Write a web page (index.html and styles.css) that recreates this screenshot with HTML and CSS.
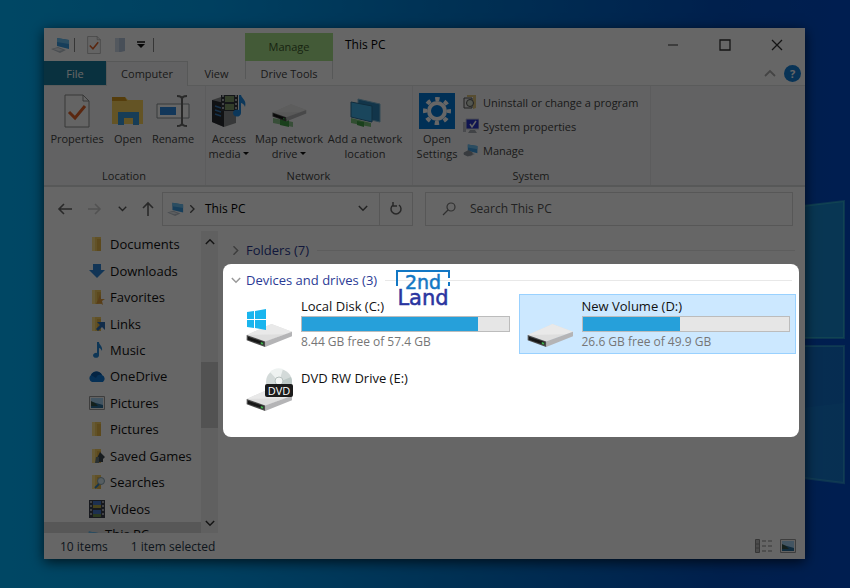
FILE: index.html
```
<!DOCTYPE html>
<html lang="en">
<head>
    <meta charset="UTF-8">
    <meta name="viewport" content="width=device-width, initial-scale=1.0">
    <title>This PC</title>
    <link rel="stylesheet" href="styles.css">
</head>
<body>
    <!-- shared icons -->
    <svg class="sprite" aria-hidden="true">
        <symbol id="pc" viewBox="0 0 20 18">
            <path d="M6 2l12 2v9L6 10z" fill="#3a9be0"/>
            <path d="M6 2l12 2v4L6 6z" fill="#6cc0f2"/>
            <path d="M0 13l7-2 8 3-6 3z" fill="#b9c3cc"/>
            <path d="M2 13l5-1 5 2-4 1z" fill="#e6ebef"/>
        </symbol>
        <symbol id="sheet" viewBox="0 0 26 34">
            <path d="M1 1h18l6 6v26H1z" fill="#fbfbfb" stroke="#8a8a8a"/>
            <path d="M19 1v6h6" fill="none" stroke="#8a8a8a"/>
            <path d="M5 18l6 6L21 12" fill="none" stroke="#e0622a" stroke-width="3"/>
        </symbol>
        <symbol id="folder" viewBox="0 0 16 16">
            <path d="M3 1h9v14H3z" fill="#f5ce62"/>
            <path d="M8 3h4v12H8z" fill="#e5b64a"/>
            <path d="M3 1h3v14H3z" fill="#ffe08a"/>
        </symbol>
        <symbol id="note" viewBox="0 0 16 16">
            <path d="M8 0h2c0 3 4 4 3 9-1-2-2-3-3-3v7a3 2.500 0 1 1-2-2z" fill="#2488d8"/>
        </symbol>
        <symbol id="picture" viewBox="0 0 16 14">
            <path d="M.5.500h15v13H.5z" fill="#f4f4f4" stroke="#9a9a9a"/>
            <path d="M2 2h12v10H2z" fill="#a8d4f5"/>
            <path d="M2 6l5 1 7 2v3H2z" fill="#2b6e9c"/>
            <path d="M2 5l4 2 3 3H2z" fill="#335247"/>
        </symbol>
        <symbol id="film" viewBox="0 0 16 18">
            <path d="M0 0h16v18H0z" fill="#3b3f4d"/>
            <path d="M4 1h8v7H4z" fill="#4a78c8"/>
            <path d="M4 5h8v3H4z" fill="#b4a844"/>
            <path d="M4 10h8v7H4z" fill="#4a78c8"/>
            <path d="M4 14h8v3H4z" fill="#6b8f50"/>
            <path d="M2 1v16M14 1v16" stroke="#a0a4aa" stroke-width="2" stroke-dasharray="2 2"/>
        </symbol>
        <symbol id="drive" viewBox="0 0 140 72">
            <path d="M2 36L76 3l61 23-80 30z" fill="#dedede"/>
            <path d="M2 36L76 3l61 23-20 8z" fill="#e9e9e9"/>
            <path d="M57 55l80-29v14L57 72z" fill="#b4b4b6"/>
            <path d="M2 36l55 19v17L2 52z" fill="#4a4a4a"/>
            <path d="M6 41l46 16v9L6 50z" fill="#171717"/>
            <path d="M44 57l7 2v6l-7-2z" fill="#3fb04c"/>
        </symbol>
        <symbol id="down" viewBox="0 0 12 8">
            <path d="M1 1l5 5 5-5" fill="none" stroke="currentColor" stroke-width="1.800"/>
        </symbol>
    </svg>

    <!-- wallpaper light panes -->
    <svg class="wallpaper" viewBox="0 0 850 588" preserveAspectRatio="xMaxYMid slice" aria-hidden="true">
        <path d="M700 218l144-17v137H700z" fill="#2ac4d8" fill-opacity=".5" stroke="#4fe0d0" stroke-width="2" stroke-opacity=".4"/>
        <path d="M700 346h144v137l-144-18z" fill="#2aa4d0" fill-opacity=".4" stroke="#4fd0d8" stroke-width="2" stroke-opacity=".4"/>
        <path d="M700 420l144-17v79l-144-17z" fill="#2ab4e6" fill-opacity=".12"/>
    </svg>

    <main class="window">
        <header class="titlebar">
            <div class="quick">
                <svg class="q-pc"><use href="#pc"/></svg>
                <span class="sep"></span>
                <button aria-label="Properties"><svg width="14" height="18"><use href="#sheet"/></svg></button>
                <button aria-label="New folder"><svg width="12" height="16"><path d="M1 1h10v13l-4 1H1z" fill="#b5c6dc"/><path d="M1 1h4v14H1z" fill="#cfdbea"/></svg></button>
                <button aria-label="Customize"><svg width="8" height="8"><path d="M0 1h8" stroke="#111" stroke-width="1.500"/><path d="M0 3h8L4 7z" fill="#111"/></svg></button>
                <span class="sep"></span>
            </div>
            <div class="manage">Manage</div>
            <h1>This PC</h1>
            <div class="controls">
                <button aria-label="Minimize"><svg width="12" height="12"><path d="M1 6h10" stroke="#333"/></svg></button>
                <button aria-label="Maximize"><svg width="12" height="12"><path d="M1 1h10v10H1z" fill="none" stroke="#333" stroke-width="1.300"/></svg></button>
                <button aria-label="Close"><svg width="12" height="12"><path d="M1 1l10 10M11 1L1 11" stroke="#333" stroke-width="1.300"/></svg></button>
            </div>
        </header>

        <nav class="tabs">
            <a href="#" class="file">File</a>
            <a href="#" class="computer">Computer</a>
            <a href="#" class="view">View</a>
            <a href="#" class="tools">Drive Tools</a>
            <div class="help">
                <button aria-label="Collapse ribbon"><svg class="up" width="12" height="8"><use href="#down"/></svg></button>
                <button class="question" aria-label="Help">?</button>
            </div>
        </nav>

        <section class="ribbon">
            <div class="group location">
                <div class="tools-row">
                    <button>
                        <svg width="26" height="34"><use href="#sheet"/></svg>
                        <span>Properties</span>
                    </button>
                    <button>
                        <svg width="34" height="34" viewBox="0 0 34 34">
                            <path d="M1 3h13l3 3h15v24H1z" fill="#f9d15c"/>
                            <path d="M1 3h13l2 4H1z" fill="#d59a20"/>
                            <path d="M7 31V18h21v13h-6v-7h-9v7z" fill="#3b9ad9"/>
                        </svg>
                        <span>Open</span>
                    </button>
                    <button>
                        <svg width="34" height="34" viewBox="0 0 34 34">
                            <path d="M1 10h32v14H1z" fill="#fff" stroke="#8a8f94"/>
                            <path d="M4 13h16v8H4z" fill="#2f8be0"/>
                            <path d="M21 2c3 0 5 1 5 3v24c0 2-2 3-5 3M31 2c-3 0-5 1-5 3v24c0 2 2 3 5 3" fill="none" stroke="#666" stroke-width="2"/>
                        </svg>
                        <span>Rename</span>
                    </button>
                </div>
                <h2>Location</h2>
            </div>
            <div class="group network">
                <div class="tools-row">
                    <button>
                        <svg width="36" height="34" viewBox="0 0 36 34">
                            <path d="M1 6l12-4 12 4v23l-12 4-12-5z" fill="#8b8d90"/>
                            <path d="M1 6l12 3v24L1 28z" fill="#2a2c30"/>
                            <path d="M4 12l6 2M4 16l6 2M4 20l6 2" stroke="#3b7bb8" stroke-width="1.500"/>
                            <path d="M10 1h17v16H10z" fill="#34373f"/>
                            <path d="M14 2h9v6h-9zM14 10h9v6h-9z" fill="#7f9c6a"/>
                            <path d="M12 1v16M25 1v16" stroke="#a8acb2" stroke-width="2" stroke-dasharray="2 2"/>
                            <path d="M28 1h2c1 4 6 5 4 12-1-3-3-4-4-4v10a4 3.500 0 1 1-2-3z" fill="#1f8ae0"/>
                        </svg>
                        <span>Access<br>media <i class="caret"></i></span>
                    </button>
                    <button>
                        <svg width="36" height="34" viewBox="0 0 36 34">
                            <path d="M2 24l20 4v5l-20-4z" fill="#8cc48c"/>
                            <path d="M9 25h9v8l-9-2z" fill="#43a047"/>
                            <use href="#drive" x="1" y="8" width="35" height="21"/>
                        </svg>
                        <span>Map network<br>drive <i class="caret"></i></span>
                    </button>
                    <button>
                        <svg width="34" height="34" viewBox="0 0 34 34">
                            <path d="M10 5l22 5v18l-22-5z" fill="#2f86b8" stroke="#7fb6d4"/>
                            <path d="M3 8l21 4v16L3 23z" fill="#43b0e6" stroke="#2a6f98"/>
                            <path d="M3 24l20 5v4L3 29z" fill="#7cc47c"/>
                            <path d="M9 27l7 1v5l-7-2z" fill="#43a047"/>
                        </svg>
                        <span>Add a network<br>location</span>
                    </button>
                </div>
                <h2>Network</h2>
            </div>
            <div class="group system">
                <div class="tools-row">
                    <button>
                        <svg width="36" height="36" viewBox="0 0 36 36">
                            <path d="M0 0h36v36H0z" fill="#0078d7"/>
                            <circle cx="18" cy="18" r="8" fill="none" stroke="#fff" stroke-width="4"/>
                            <circle cx="18" cy="18" r="12" fill="none" stroke="#fff" stroke-width="4" stroke-dasharray="4.400 5.025" stroke-dashoffset="2.200"/>
                        </svg>
                        <span>Open<br>Settings</span>
                    </button>
                    <ul class="links">
                        <li><button>
                            <svg width="16" height="16" viewBox="0 0 16 16">
                                <path d="M4 1h9v13l-3 1V3H4z" fill="#d9c07c"/>
                                <path d="M1 4h8v10H1z" fill="#e8e8e8" stroke="#555"/>
                                <circle cx="7" cy="9" r="3.500" fill="#cfd6c8" stroke="#555"/>
                            </svg>
                            Uninstall or change a program
                        </button></li>
                        <li><button>
                            <svg width="16" height="16" viewBox="0 0 16 16">
                                <path d="M0 4h3v10H0z" fill="#b8bcc4"/>
                                <path d="M3 1h13v10H3z" fill="#2a35c8" stroke="#c5c9d4"/>
                                <path d="M7 6l2 3 4-6" fill="none" stroke="#fff" stroke-width="1.500"/>
                                <path d="M7 12h5l2 3H5z" fill="#a4a8b0"/>
                            </svg>
                            System properties
                        </button></li>
                        <li><button>
                            <svg width="16" height="16" viewBox="0 0 20 18"><use href="#pc"/><path d="M1 12l6-3 5 3v3l-6 2-5-2z" fill="#8c959e"/></svg>
                            Manage
                        </button></li>
                    </ul>
                </div>
                <h2>System</h2>
            </div>
        </section>

        <div class="toolbar">
            <div class="history">
                <button aria-label="Back"><svg width="16" height="12"><path d="M15 6H2M7 1L2 6l5 5" fill="none" stroke="#666" stroke-width="1.600"/></svg></button>
                <button aria-label="Forward"><svg width="14" height="12"><path d="M0 6h12M7 1l5 5-5 5" fill="none" stroke="#ccc" stroke-width="1.600"/></svg></button>
                <button aria-label="Recent"><svg width="9" height="6"><use href="#down"/></svg></button>
                <button aria-label="Up"><svg width="12" height="15"><path d="M6 15V2M1 7l5-5 5 5" fill="none" stroke="#666" stroke-width="1.600"/></svg></button>
            </div>
            <div class="address">
                <svg width="18" height="16"><use href="#pc"/></svg>
                <svg class="right" width="9" height="6"><use href="#down"/></svg>
                <span>This PC</span>
                <button aria-label="Previous locations"><svg width="10" height="7"><use href="#down"/></svg></button>
                <button class="refresh" aria-label="Refresh"><svg width="14" height="14"><path d="M4 3a5 5 0 1 0 6 0M4 0v4h4" fill="none" stroke="#666" stroke-width="1.500"/></svg></button>
            </div>
            <label class="search">
                <svg width="14" height="14"><circle cx="9" cy="5" r="4" fill="none" stroke="#777" stroke-width="1.200"/><path d="M6 8l-5 5" stroke="#777" stroke-width="1.200"/></svg>
                <input type="text" placeholder="Search This PC" aria-label="Search This PC">
            </label>
        </div>

        <div class="body">
            <nav class="tree">
                <ul>
                    <li><a href="#"><svg><use href="#folder"/></svg>Documents</a></li>
                    <li><a href="#"><svg viewBox="0 0 16 16"><path d="M4 1h8v6h4l-8 8-8-8h4z" fill="#2f86d6"/></svg>Downloads</a></li>
                    <li><a href="#"><svg viewBox="0 0 16 16"><use href="#folder"/><path d="M11 5l1 5h4l-3 2 1 4-3-2-4 1 2-4z" fill="#dd9a3c"/></svg>Favorites</a></li>
                    <li><a href="#"><svg viewBox="0 0 16 16"><use href="#folder"/><path d="M8 6h8v8l-3-3-4 4-2-2 4-4z" fill="#2c6fb8"/></svg>Links</a></li>
                    <li><a href="#"><svg><use href="#note"/></svg>Music</a></li>
                    <li><a href="#"><svg viewBox="0 0 16 12"><path d="M3 12a4 4 0 0 1-1-7 6 6 0 0 1 11 0 4 4 0 0 1 1 7z" fill="#0f78d4"/><path d="M2 5a6 6 0 0 1 11 0c-3-1-5 0-6 3z" fill="#0a5aa8"/></svg>OneDrive</a></li>
                    <li><a href="#"><svg><use href="#picture"/></svg>Pictures</a></li>
                    <li><a href="#"><svg><use href="#folder"/></svg>Pictures</a></li>
                    <li><a href="#"><svg viewBox="0 0 16 16"><use href="#folder"/><path d="M11 4l5 5-2 2v3H9l1-3-2-1z" fill="#3c4a50"/><path d="M7 9h3v6H6z" fill="#6a7c80"/></svg>Saved Games</a></li>
                    <li><a href="#"><svg viewBox="0 0 16 16"><use href="#folder"/><circle cx="12" cy="7" r="3.500" fill="#d6ebf5" stroke="#8aa4b0"/><path d="M10 10l-4 4" stroke="#3a86c0" stroke-width="2"/></svg>Searches</a></li>
                    <li><a href="#"><svg><use href="#film"/></svg>Videos</a></li>
                </ul>
                <a href="#" class="current"><svg><use href="#pc"/></svg>This PC</a>
            </nav>
            <div class="scrollbar">
                <svg class="up" width="10" height="7"><use href="#down"/></svg>
                <div class="track"><div class="thumb"></div></div>
                <svg width="10" height="7"><use href="#down"/></svg>
            </div>

            <section class="content">
                <h2 class="heading">
                    <svg class="right" width="10" height="7"><use href="#down"/></svg>
                    Folders (7)
                </h2>
                <!-- spotlight: its shadow darkens everything around it -->
                <div class="spotlight">
                    <h2 class="heading">
                        <svg width="10" height="7"><use href="#down"/></svg>
                        Devices and drives (3)
                    </h2>
                    <div class="drives">
                        <article class="drive">
                            <svg viewBox="0 0 47 54">
                                <use href="#drive" y="25" width="47" height="26"/>
                                <path d="M1 15l7-1v8H1zM9 14l11-2v10H9zM1 23h7v8l-7-1zM9 23h11v10L9 31z" fill="#19b5ee"/>
                            </svg>
                            <div class="info">
                                <h3>Local Disk (C:)</h3>
                                <div class="bar"><div class="fill" style="width: 85%"></div></div>
                                <p>8.44 GB free of 57.4 GB</p>
                            </div>
                        </article>
                        <article class="drive selected">
                            <svg viewBox="0 0 47 54"><use href="#drive" y="25" width="47" height="26"/></svg>
                            <div class="info">
                                <h3>New Volume (D:)</h3>
                                <div class="bar"><div class="fill" style="width: 47%"></div></div>
                                <p>26.6 GB free of 49.9 GB</p>
                            </div>
                        </article>
                        <article class="drive">
                            <svg viewBox="0 0 47 54">
                                <circle cx="33" cy="13" r="13" fill="#d3dad9"/>
                                <path d="M33 13L24 3a13 13 0 0 1 13-3z" fill="#eef2f1"/>
                                <path d="M33 13l12-5a13 13 0 0 1 0 10z" fill="#bcc8c6"/>
                                <use href="#drive" y="17" width="47" height="26"/>
                                <circle cx="33" cy="12" r="4" fill="#f2f5f4" stroke="#b5bfbd"/>
                                <rect x="19" y="15" width="28" height="13" rx="2" fill="#1c1c1c"/>
                                <text x="33" y="26" class="dvd">DVD</text>
                            </svg>
                            <div class="info">
                                <h3>DVD RW Drive (E:)</h3>
                            </div>
                        </article>
                    </div>
                    <div class="logo">
                        <svg viewBox="0 0 56 40">
                            <path d="M2 18V3h52v7M54 14v4" fill="none" stroke="#1277c4" stroke-width="2"/>
                            <text x="28" y="21" class="top">2nd</text>
                            <text x="28" y="37" class="bottom">Land</text>
                        </svg>
                    </div>
                </div>
            </section>
        </div>

        <footer class="status">
            <span>10 items</span>
            <span>1 item selected</span>
            <div class="modes">
                <button aria-label="Details"><svg width="17" height="14"><path d="M.5.500h4v13h-4zM.5 5h4M.5 9h4" fill="#bbb" stroke="#888"/><path d="M7 2h4M13 2h4M7 7h4M13 7h4M7 12h4M13 12h4" stroke="#888"/></svg></button>
                <button aria-label="Large icons"><svg width="16" height="14"><use href="#picture"/></svg></button>
            </div>
        </footer>
    </main>
</body>
</html>
```
FILE: styles.css
```
*{
    margin: 0;
    padding: 0;
    box-sizing: border-box;
}
body{
    position: relative;
    height: 100vh;
    min-height: 560px;
    padding: 28px 45px 29px 44px;
    display: flex;
    overflow: hidden;
    background: linear-gradient(to right, #00b2fa, #00a0f0 25%, #0078d0 55%, #0050c0 85%, #004cc8);
    font-family: "Open Sans", "Noto Sans", sans-serif;
    font-size: 12px;
    color: #222;
}
button{
    border: 0;
    background: none;
    font: inherit;
    color: inherit;
}
a{
    color: inherit;
    text-decoration: none;
}
ul{
    list-style: none;
}
h1, h2, h3{
    font-weight: normal;
}
svg{
    flex: none;
    display: block;
}
.sprite{
    position: absolute;
    width: 0;
    height: 0;
}
.wallpaper{
    position: absolute;
    top: 0;
    left: 0;
    width: 100%;
    height: 100%;
}
.up{
    transform: rotate(180deg);
}
.right{
    transform: rotate(-90deg);
}
.window{
    position: relative;
    flex: 1;
    min-width: 0;
    display: flex;
    flex-direction: column;
    background: #fff;
    box-shadow: 0 3px 12px rgba(0,0,0,0.7);
}

/* title bar */
.titlebar{
    height: 33px;
    display: flex;
    align-items: center;
}
.quick{
    width: 201px;
    padding-left: 7px;
    display: flex;
    align-items: center;
}
.q-pc{
    width: 20px;
    height: 18px;
}
.sep{
    width: 1px;
    height: 14px;
    margin: 0 4px 0 3px;
    background: #888;
}
.quick button{
    width: 21px;
    display: flex;
    justify-content: center;
}
.quick .sep + button{
    width: 30px;
}
.quick .sep:last-child{
    margin-left: 2px;
}
.manage{
    align-self: flex-end;
    width: 88px;
    height: 28px;
    line-height: 28px;
    text-align: center;
    background: #a9e08a;
    font-size: 11px;
    color: #3b5a2c;
}
.titlebar h1{
    flex: 1;
    padding-left: 12px;
    font-size: 12px;
    color: #000;
}
.controls{
    display: flex;
    padding-right: 2px;
}
.controls button{
    width: 52px;
    height: 33px;
    display: flex;
    justify-content: center;
    align-items: center;
}

/* tabs */
.tabs{
    height: 25px;
    display: flex;
    text-align: center;
    font-size: 11px;
    line-height: 25px;
    border-bottom: 1px solid #e2e3e4;
    color: #444;
}
.file{
    width: 62px;
    background: #187a9e;
    color: #fff;
}
.computer{
    width: 82px;
    height: 25px;
    background: #f5f6f7;
    border: 1px solid #dadbdc;
    border-bottom: 0;
    line-height: 24px;
}
.view{
    width: 57px;
}
.tools{
    width: 88px;
    height: 18px;
    border: solid #dadbdc;
    border-width: 0 1px;
}
.help{
    margin-left: auto;
    padding-right: 4px;
    display: flex;
    align-items: center;
    gap: 8px;
    color: #aaa;
}
.question{
    width: 17px;
    height: 17px;
    border-radius: 50%;
    background: #1480d8;
    color: #fff;
    font-weight: bold;
    line-height: 17px;
}

/* ribbon */
.ribbon{
    height: 101px;
    display: flex;
    background: #f5f6f7;
    border-bottom: 2px solid #dadbdc;
    font-size: 11px;
    color: #444;
}
.group{
    display: flex;
    flex-direction: column;
    justify-content: space-between;
    padding: 7px 4px 1px 3px;
    border-right: 1px solid #e6e7e8;
}
.location{
    width: 162px;
}
.network{
    width: 207px;
}
.system{
    width: 238px;
}
.tools-row{
    display: grid;
    align-items: start;
}
.location .tools-row{
    grid-template-columns: 60px 42px 48px;
}
.network .tools-row{
    grid-template-columns: 40px 80px 72px;
}
.system .tools-row{
    grid-template-columns: 42px 1fr;
    column-gap: 5px;
}
.tools-row > button{
    display: flex;
    flex-direction: column;
    align-items: center;
    gap: 2px;
    line-height: 15px;
    white-space: nowrap;
}
.tools-row > button svg{
    height: 36px;
}
.group h2{
    font-size: 11px;
    line-height: 16px;
    text-align: center;
}
.caret{
    display: inline-block;
    vertical-align: 3px;
    border: 3px solid transparent;
    border-top-color: #111;
    border-bottom: 0;
}
.links{
    display: grid;
    grid-auto-rows: 24px;
}
.links button{
    height: 18px;
    display: flex;
    align-items: center;
    gap: 4px;
    white-space: nowrap;
}

/* address and search */
.toolbar{
    height: 44px;
    padding: 0 12px 1px 13px;
    display: flex;
    align-items: center;
    color: #555;
}
.history{
    width: 105px;
    display: flex;
    align-items: center;
    justify-content: space-between;
    padding-right: 8px;
}
.address{
    width: 251px;
    height: 34px;
    margin-right: 12px;
    padding-left: 4px;
    display: flex;
    align-items: center;
    gap: 3px;
    border: 1px solid #d9d9d9;
}
.address span{
    flex: 1;
    padding-left: 5px;
    color: #000;
}
.address button{
    height: 32px;
    padding: 0 8px;
    display: flex;
    align-items: center;
}
.address .refresh{
    width: 33px;
    justify-content: center;
    border-left: 1px solid #d9d9d9;
}
.search{
    flex: 1;
    height: 34px;
    padding-left: 16px;
    display: flex;
    align-items: center;
    gap: 14px;
    border: 1px solid #d9d9d9;
}
.search input{
    flex: 1;
    min-width: 0;
    border: 0;
    outline: 0;
    background: none;
    font: inherit;
}
.search input::placeholder{
    color: #555;
    opacity: 1;
}

/* folder tree */
.body{
    flex: 1;
    min-height: 0;
    display: flex;
}
.tree{
    width: 157px;
    display: flex;
    flex-direction: column;
    font-size: 13px;
    color: #111;
}
.tree ul{
    flex: 1;
    display: grid;
    grid-auto-rows: 1fr;
}
.tree a{
    height: 100%;
    padding-left: 45px;
    display: flex;
    align-items: center;
    gap: 5px;
}
.tree svg{
    width: 16px;
    height: 18px;
}
.tree .current{
    height: 11px;
    padding-left: 40px;
    align-items: flex-start;
    overflow: hidden;
    background: #d9d9d9;
    line-height: 24px;
}
.tree .current svg{
    margin-top: 6px;
}
.scrollbar{
    width: 17px;
    padding: 7px 0 6px;
    display: flex;
    flex-direction: column;
    align-items: center;
    background: #f0f0f0;
    color: #333;
}
.track{
    flex: 1;
    width: 100%;
    padding-top: 117px;
}
.thumb{
    height: 66px;
    background: #cdcdcd;
}

/* content */
.content{
    flex: 1;
    padding: 5px 6px 0 5px;
}
.heading{
    height: 28px;
    padding: 0 4px 0 8px;
    display: flex;
    align-items: center;
    gap: 5px;
    font-size: 13px;
    color: #2b3b95;
}
.heading svg{
    color: #999;
}
.heading::after{
    content: "";
    flex: 1;
    height: 1px;
    margin-left: 3px;
    background: #e8e8e8;
}
.spotlight{
    position: relative;
    z-index: 1;
    min-height: 173px;
    padding: 2px 3px 11px 0;
    border-radius: 8px;
    background: #fff;
    box-shadow: 0 0 0 2000px rgba(0,0,0,0.6);
}
.drives{
    padding-left: 15px;
    display: grid;
    grid-template-columns: 1fr 1fr;
    gap: 12px 3px;
}
.drive{
    height: 60px;
    padding: 2px 5px 3px 7px;
    display: flex;
    gap: 8px;
    border: 1px solid transparent;
}
.drive > svg{
    width: 47px;
    height: 54px;
    overflow: visible;
}
.selected{
    background: #cce8ff;
    border-color: #99d1ff;
}
.info{
    flex: 1;
}
.info h3{
    height: 19px;
    font-size: 13px;
    line-height: 18px;
    color: #111;
}
.info p{
    line-height: 20px;
    color: #767676;
}
.bar{
    height: 16px;
    border: 1px solid #bcbcbc;
    background: #e6e6e6;
}
.fill{
    height: 100%;
    background: #26a0da;
}
.dvd{
    font-size: 11px;
    text-anchor: middle;
    fill: #fff;
}
.logo{
    position: absolute;
    top: 4px;
    left: 172px;
}
.logo svg{
    width: 56px;
    height: 40px;
    overflow: visible;
    font-family: "DejaVu Sans", sans-serif;
    text-anchor: middle;
    stroke-width: 0.5px;
}
.logo path{
    stroke-width: 2px;
}
.logo .top{
    font-size: 19px;
    fill: #1277c4;
    stroke: #1277c4;
}
.logo .bottom{
    font-size: 21px;
    fill: #2a35a0;
    stroke: #2a35a0;
}

/* status bar */
.status{
    height: 26px;
    padding: 0 9px 0 16px;
    display: flex;
    align-items: center;
    gap: 23px;
    color: #26374a;
}
.modes{
    margin-left: auto;
    display: flex;
    gap: 8px;
}
```
